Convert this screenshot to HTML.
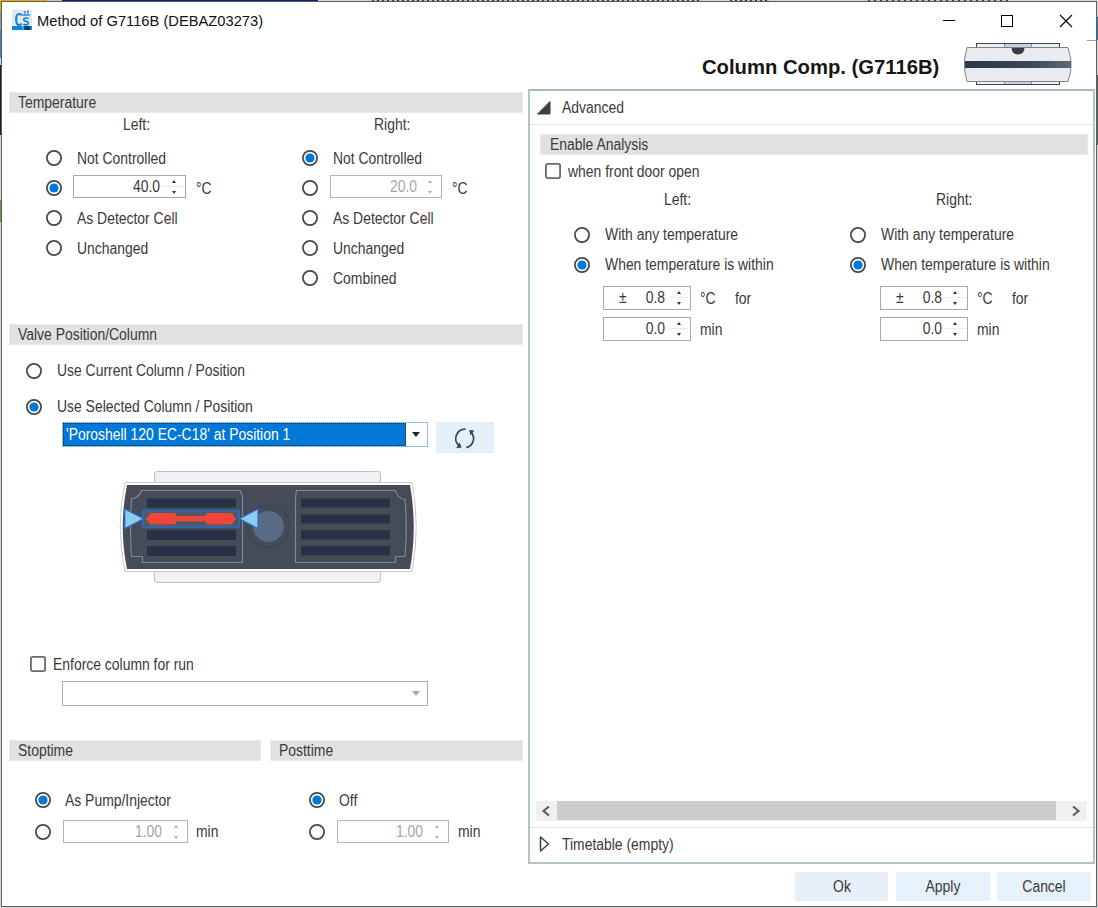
<!DOCTYPE html>
<html><head><meta charset="utf-8"><style>
html,body{margin:0;padding:0;width:1098px;height:908px;overflow:hidden;background:#fff}
.a{position:absolute}
.t{position:absolute;white-space:nowrap;font-family:"Liberation Sans", sans-serif}
.rad{width:16px;height:16px;border:1.7px solid #454a52;border-radius:50%;box-sizing:border-box;background:#fff}
.dot{width:9px;height:9px;border-radius:50%;background:#0078d7}
.chk{width:16px;height:16px;border:2px solid #3a3f47;box-sizing:border-box;background:#fff}
</style></head><body>
<div class="a" style="left:0px;top:0px;width:1098px;height:908px;background:#d6d6d6"></div>
<div class="a" style="left:0px;top:0px;width:47px;height:1px;background:#e8a800"></div>
<div class="a" style="left:47px;top:0px;width:15px;height:1px;background:#c4c8d0"></div>
<div class="a" style="left:62px;top:0px;width:256px;height:1px;background:#0a1a7a"></div>
<div class="a" style="left:0px;top:0px;width:1px;height:12px;background:#e8a800"></div>
<div class="a" style="left:372px;top:0px;width:330px;height:1px;background:repeating-linear-gradient(90deg,#3a3a3a 0 2px,#c4c4c4 2px 5px)"></div>
<div class="a" style="left:730px;top:0px;width:40px;height:1px;background:repeating-linear-gradient(90deg,#3a3a3a 0 2px,#c4c4c4 2px 5px)"></div>
<div class="a" style="left:868px;top:0px;width:140px;height:1px;background:repeating-linear-gradient(90deg,#3a3a3a 0 2px,#c4c4c4 2px 6px)"></div>
<div class="a" style="left:0px;top:12px;width:1px;height:18px;background:#9098a8"></div>
<div class="a" style="left:0px;top:30px;width:1px;height:28px;background:#3a82c8"></div>
<div class="a" style="left:0px;top:65px;width:1px;height:70px;background:#10203a"></div>
<div class="a" style="left:0px;top:200px;width:1px;height:22px;background:#5aa030"></div>
<div class="a" style="left:1097px;top:17px;width:1px;height:23px;background:#2a7ad0"></div>
<div class="a" style="left:1097px;top:75px;width:1px;height:70px;background:#505860"></div>
<div class="a" style="left:1px;top:1px;width:1096px;height:906px;background:#5e5e5e"></div>
<div class="a" style="left:2px;top:2px;width:1094px;height:904px;background:#ffffff"></div>
<div class="a" style="left:1087px;top:40px;width:9px;height:1px;background:#a0a0a0"></div>
<svg class="a" style="left:12px;top:10px" width="20" height="20" viewBox="12 10 20 20">
<rect x="12" y="10" width="20" height="16" fill="#dfe9f5"/>
<path d="M21.5 15.3 Q21 14 19 14 Q16.2 14 16.2 19.5 Q16.2 25 19 25 Q21 25 21.6 23.5" fill="none" stroke="#1a7fd0" stroke-width="2.1"/>
<path d="M28.3 18.6 Q28 18 26 18 Q23.6 18 23.8 19.8 Q24 21.2 26 21.4 Q28.4 21.7 28.3 23.3 Q28.2 24.8 26 24.8 Q24 24.8 23.5 24" fill="none" stroke="#1a7fd0" stroke-width="1.7"/>
<rect x="22.2" y="14.3" width="7.6" height="1.4" fill="#1a7fd0"/>
<rect x="24" y="11" width="1.6" height="2.6" fill="#3a8ed8"/>
<rect x="27" y="10.4" width="1.6" height="3.2" fill="#3a8ed8"/>
<rect x="12" y="26" width="20" height="4" fill="#1584d8"/>
<rect x="22" y="26" width="2.3" height="4" fill="#20b4ec"/>
<rect x="24.3" y="26" width="5.7" height="4" fill="#0b3a66"/>
</svg>
<div class="t" style="left:37px;top:12.10px;font-size:15px;line-height:17px;color:#111;font-weight:normal;transform:scaleX(0.98);transform-origin:0 0;">Method of G7116B (DEBAZ03273)</div>
<div class="a" style="left:943px;top:20px;width:12px;height:1px;background:#000"></div>
<div class="a" style="left:1001px;top:15px;width:12px;height:12px;border:1px solid #000;box-sizing:border-box"></div>
<svg class="a" style="left:1059px;top:14px" width="14" height="14"><path d="M1 1 L13 13 M13 1 L1 13" stroke="#000" stroke-width="1.1"/></svg>
<div class="t" style="left:702px;top:56.07px;font-size:20px;line-height:22px;color:#161616;font-weight:bold;transform:scaleX(1.012);transform-origin:0 0;">Column Comp. (G7116B)</div>
<svg class="a" style="left:960px;top:40px" width="115" height="50" viewBox="960 40 115 50">
<rect x="976.5" y="43.5" width="83" height="5" fill="#eef0f4" stroke="#3a4450" stroke-width="1"/>
<rect x="1005" y="44" width="26" height="4" fill="#cdd1d8"/>
<line x1="1004.5" y1="44" x2="1004.5" y2="48" stroke="#8a94a0"/><line x1="1031.5" y1="44" x2="1031.5" y2="48" stroke="#8a94a0"/>
<rect x="976.5" y="80.5" width="83" height="4" fill="#eef0f4" stroke="#3a4450" stroke-width="1"/>
<rect x="1005" y="81" width="26" height="3" fill="#cdd1d8"/><line x1="1004.5" y1="81" x2="1004.5" y2="84" stroke="#8a94a0"/><line x1="1031.5" y1="81" x2="1031.5" y2="84" stroke="#8a94a0"/>
<path d="M967 47.5 L1068 47.5 Q1071.5 60 1071 64.5 Q1071.5 70 1068 81.5 L967 81.5 Q964 70 964.5 64.5 Q964 60 967 47.5 Z" fill="#e9ebf1" stroke="#7a828e" stroke-width="1"/>
<defs><linearGradient id="cg" x1="0" x2="1"><stop offset="0" stop-color="#2c3846"/><stop offset="0.6" stop-color="#3a4656"/><stop offset="1" stop-color="#606873"/></linearGradient></defs>
<rect x="965" y="61" width="106" height="7" fill="url(#cg)"/>
<path d="M1011.5 48 L1024.5 48 Q1024 54.5 1018 54.5 Q1012 54.5 1011.5 48 Z" fill="#343e4a"/>
</svg>
<div class="a" style="left:9px;top:92px;width:514px;height:21px;background:#e9e9e9"></div>
<div class="a" style="left:10px;top:93px;width:512px;height:19px;background:#e1e1e1"></div>
<div class="t" style="left:18px;top:93.96px;font-size:16px;line-height:18px;color:#3a3a3a;font-weight:normal;transform:scaleX(0.87);transform-origin:0 0;">Temperature</div>
<div class="t" style="left:123px;top:116.46px;font-size:16px;line-height:18px;color:#3a3a3a;font-weight:normal;transform:scaleX(0.87);transform-origin:0 0;">Left:</div>
<div class="t" style="left:374px;top:116.46px;font-size:16px;line-height:18px;color:#3a3a3a;font-weight:normal;transform:scaleX(0.87);transform-origin:0 0;">Right:</div>
<svg class="a" style="left:44px;top:148px" width="20" height="20"><circle cx="10" cy="10" r="7.1" fill="#fff" stroke="#43484f" stroke-width="1.8"/></svg>
<div class="t" style="left:77px;top:149.96px;font-size:16px;line-height:18px;color:#3a3a3a;font-weight:normal;transform:scaleX(0.87);transform-origin:0 0;">Not Controlled</div>
<svg class="a" style="left:44px;top:178px" width="20" height="20"><circle cx="10" cy="10" r="7.1" fill="#fff" stroke="#43484f" stroke-width="1.8"/><circle cx="10" cy="10" r="4.6" fill="#0078d7"/></svg>
<div class="a" style="left:73px;top:175px;width:113px;height:23px;border:1px solid #a8a8a8;box-sizing:border-box;background:#fff"></div>
<div class="t" style="left:-40.5px;width:200px;text-align:right;top:178.46px;font-size:16px;line-height:18px;color:#3a3a3a;transform:scaleX(0.87);transform-origin:100% 0">40.0</div>
<div class="a" style="left:171.5px;top:180.0px;width:0;height:0;border-left:2.5px solid transparent;border-right:2.5px solid transparent;border-bottom:3px solid #333"></div>
<div class="a" style="left:171.5px;top:191.0px;width:0;height:0;border-left:2.5px solid transparent;border-right:2.5px solid transparent;border-top:3px solid #333"></div>
<div class="a" style="left:163px;top:185.5px;width:21px;height:1px;background:#ececec"></div>
<div class="t" style="left:196px;top:179.96px;font-size:16px;line-height:18px;color:#3a3a3a;font-weight:normal;transform:scaleX(0.87);transform-origin:0 0;">&deg;C</div>
<svg class="a" style="left:44px;top:208px" width="20" height="20"><circle cx="10" cy="10" r="7.1" fill="#fff" stroke="#43484f" stroke-width="1.8"/></svg>
<div class="t" style="left:77px;top:209.96px;font-size:16px;line-height:18px;color:#3a3a3a;font-weight:normal;transform:scaleX(0.87);transform-origin:0 0;">As Detector Cell</div>
<svg class="a" style="left:44px;top:238px" width="20" height="20"><circle cx="10" cy="10" r="7.1" fill="#fff" stroke="#43484f" stroke-width="1.8"/></svg>
<div class="t" style="left:77px;top:239.96px;font-size:16px;line-height:18px;color:#3a3a3a;font-weight:normal;transform:scaleX(0.87);transform-origin:0 0;">Unchanged</div>
<svg class="a" style="left:300px;top:148px" width="20" height="20"><circle cx="10" cy="10" r="7.1" fill="#fff" stroke="#43484f" stroke-width="1.8"/><circle cx="10" cy="10" r="4.6" fill="#0078d7"/></svg>
<div class="t" style="left:333px;top:149.96px;font-size:16px;line-height:18px;color:#3a3a3a;font-weight:normal;transform:scaleX(0.87);transform-origin:0 0;">Not Controlled</div>
<svg class="a" style="left:300px;top:178px" width="20" height="20"><circle cx="10" cy="10" r="7.1" fill="#fff" stroke="#43484f" stroke-width="1.8"/></svg>
<div class="a" style="left:330px;top:175px;width:112px;height:23px;border:1px solid #b4b4b4;box-sizing:border-box;background:#fff"></div>
<div class="t" style="left:216.5px;width:200px;text-align:right;top:178.46px;font-size:16px;line-height:18px;color:#a6a6a6;transform:scaleX(0.87);transform-origin:100% 0">20.0</div>
<div class="a" style="left:427.5px;top:180.0px;width:0;height:0;border-left:2.5px solid transparent;border-right:2.5px solid transparent;border-bottom:3px solid #b0b0b0"></div>
<div class="a" style="left:427.5px;top:191.0px;width:0;height:0;border-left:2.5px solid transparent;border-right:2.5px solid transparent;border-top:3px solid #b0b0b0"></div>
<div class="t" style="left:452px;top:179.96px;font-size:16px;line-height:18px;color:#3a3a3a;font-weight:normal;transform:scaleX(0.87);transform-origin:0 0;">&deg;C</div>
<svg class="a" style="left:300px;top:208px" width="20" height="20"><circle cx="10" cy="10" r="7.1" fill="#fff" stroke="#43484f" stroke-width="1.8"/></svg>
<div class="t" style="left:333px;top:209.96px;font-size:16px;line-height:18px;color:#3a3a3a;font-weight:normal;transform:scaleX(0.87);transform-origin:0 0;">As Detector Cell</div>
<svg class="a" style="left:300px;top:238px" width="20" height="20"><circle cx="10" cy="10" r="7.1" fill="#fff" stroke="#43484f" stroke-width="1.8"/></svg>
<div class="t" style="left:333px;top:239.96px;font-size:16px;line-height:18px;color:#3a3a3a;font-weight:normal;transform:scaleX(0.87);transform-origin:0 0;">Unchanged</div>
<svg class="a" style="left:300px;top:268px" width="20" height="20"><circle cx="10" cy="10" r="7.1" fill="#fff" stroke="#43484f" stroke-width="1.8"/></svg>
<div class="t" style="left:333px;top:269.96px;font-size:16px;line-height:18px;color:#3a3a3a;font-weight:normal;transform:scaleX(0.87);transform-origin:0 0;">Combined</div>
<div class="a" style="left:9px;top:324px;width:514px;height:21px;background:#e9e9e9"></div>
<div class="a" style="left:10px;top:325px;width:512px;height:19px;background:#e1e1e1"></div>
<div class="t" style="left:18px;top:325.96px;font-size:16px;line-height:18px;color:#3a3a3a;font-weight:normal;transform:scaleX(0.87);transform-origin:0 0;">Valve Position/Column</div>
<svg class="a" style="left:24px;top:360.5px" width="20" height="20"><circle cx="10" cy="10" r="7.1" fill="#fff" stroke="#43484f" stroke-width="1.8"/></svg>
<div class="t" style="left:57px;top:362.46px;font-size:16px;line-height:18px;color:#3a3a3a;font-weight:normal;transform:scaleX(0.87);transform-origin:0 0;">Use Current Column / Position</div>
<svg class="a" style="left:24px;top:396.5px" width="20" height="20"><circle cx="10" cy="10" r="7.1" fill="#fff" stroke="#43484f" stroke-width="1.8"/><circle cx="10" cy="10" r="4.6" fill="#0078d7"/></svg>
<div class="t" style="left:57px;top:398.46px;font-size:16px;line-height:18px;color:#3a3a3a;font-weight:normal;transform:scaleX(0.87);transform-origin:0 0;">Use Selected Column / Position</div>
<div class="a" style="left:62px;top:422px;width:366px;height:25px;border:1px solid #8fc0ea;box-sizing:border-box;background:#fff"></div>
<div class="a" style="left:63px;top:423px;width:343px;height:23px;background:#0078d7;outline:1px dotted #222;outline-offset:-1px"></div>
<div class="t" style="left:66px;top:426.46px;font-size:16px;line-height:18px;color:#fff;font-weight:normal;transform:scaleX(0.87);transform-origin:0 0;">'Poroshell 120 EC-C18' at Position 1</div>
<div class="a" style="left:412px;top:432px;width:0;height:0;border-left:4.5px solid transparent;border-right:4.5px solid transparent;border-top:5px solid #222"></div>
<div class="a" style="left:436px;top:422px;width:58px;height:31px;background:#e3f0fa"></div>
<svg class="a" style="left:450px;top:424px" width="30" height="30" viewBox="450 424 30 30">
<path d="M465.5 429.2 A9.4 9.4 0 0 0 459.4 446" fill="none" stroke="#3c4550" stroke-width="1.7"/>
<path d="M466.3 447.6 A9.4 9.4 0 0 0 470.8 431.8" fill="none" stroke="#3c4550" stroke-width="1.7"/>
<path d="M456.2 448.3 L461.6 447.6 L459.6 442.2 Z" fill="#3c4550"/>
<path d="M469.2 430.1 L474.4 430.6 L470.4 435.4 Z" fill="#3c4550"/>
</svg>
<svg class="a" style="left:110px;top:465px" width="320" height="125" viewBox="110 465 320 125">
<rect x="154.5" y="471.5" width="226" height="20" rx="2.5" fill="#eff1f5" stroke="#b9c0cf" stroke-width="1"/>
<rect x="154.5" y="562.5" width="226" height="20" rx="2.5" fill="#eff1f5" stroke="#b9c0cf" stroke-width="1"/>
<path d="M125 482.5 L412 482.5 Q420.5 526 412 571.5 L125 571.5 Q115.5 526 125 482.5 Z" fill="#fff" stroke="#c3c8d3" stroke-width="1"/>
<path d="M127 485 L410 485 Q417.5 527 410 569 L127 569 Q118.5 527 127 485 Z" fill="#454c57"/>
<path d="M141.5 490.5 L240.5 490.5 L242.5 497 L242.5 562.5 L142.5 562.5 L142.5 556.5 L131.5 556.5 Q129.5 526 131.5 498.5 Q139 498 141.5 490.5 Z" fill="none" stroke="#7d8597" stroke-width="1.2"/>
<path d="M296.5 490.5 L395.5 490.5 Q397 498 405 499.5 Q407.5 526 405 556.5 L395.5 556.5 L395.5 562.5 L295.5 562.5 L295.5 497 Z" fill="none" stroke="#7d8597" stroke-width="1.2"/>
<g fill="#283246">
<rect x="147" y="498.5" width="89" height="9"/>
<rect x="147" y="530" width="89" height="10"/>
<rect x="147" y="546" width="89" height="10"/>
<rect x="301" y="498.5" width="89" height="9"/>
<rect x="301" y="514.5" width="89" height="9"/>
<rect x="301" y="530.2" width="89" height="9.3"/>
<rect x="301" y="546" width="89" height="9.4"/>
</g>
<circle cx="268.4" cy="526.4" r="21" fill="none" stroke="#3c4557" stroke-width="1.2"/>
<circle cx="268.4" cy="526.4" r="15.5" fill="#5b6b86"/>
<rect x="142.8" y="510.5" width="96.5" height="16.5" fill="#4d5869" stroke="#2d6cc2" stroke-width="1.5"/>
<g fill="#f0463a"><rect x="148.5" y="513" width="28" height="11.4" rx="3.5"/><rect x="205.5" y="513" width="28" height="11.4" rx="3.5"/><rect x="175" y="516" width="32" height="5.4"/><path d="M145.5 518.7 L150 515 L150 522.4 Z"/><path d="M236.5 518.7 L232 515 L232 522.4 Z"/></g>
<path d="M124.8 509 L143.5 518.7 L124.8 528.5 Z" fill="#8ecbf2" stroke="#2c6cc4" stroke-width="1.2"/>
<path d="M258 509 L239.3 518.7 L258 528.5 Z" fill="#8ecbf2" stroke="#2c6cc4" stroke-width="1.2"/>
</svg>
<svg class="a" style="left:30px;top:656px" width="16" height="16"><rect x="0.9" y="0.9" width="14.2" height="14.2" rx="1.8" fill="#fff" stroke="#636a73" stroke-width="1.8"/></svg>
<div class="t" style="left:53px;top:656.46px;font-size:16px;line-height:18px;color:#3a3a3a;font-weight:normal;transform:scaleX(0.87);transform-origin:0 0;">Enforce column for run</div>
<div class="a" style="left:62px;top:681px;width:366px;height:25px;border:1px solid #adadad;box-sizing:border-box;background:#fff"></div>
<div class="a" style="left:412px;top:691px;width:0;height:0;border-left:4.5px solid transparent;border-right:4.5px solid transparent;border-top:5px solid #a8a8a8"></div>
<div class="a" style="left:9px;top:740px;width:252px;height:21px;background:#e9e9e9"></div>
<div class="a" style="left:10px;top:741px;width:250px;height:19px;background:#e1e1e1"></div>
<div class="t" style="left:18px;top:741.96px;font-size:16px;line-height:18px;color:#3a3a3a;font-weight:normal;transform:scaleX(0.87);transform-origin:0 0;">Stoptime</div>
<div class="a" style="left:270px;top:740px;width:253px;height:21px;background:#e9e9e9"></div>
<div class="a" style="left:271px;top:741px;width:251px;height:19px;background:#e1e1e1"></div>
<div class="t" style="left:279px;top:741.96px;font-size:16px;line-height:18px;color:#3a3a3a;font-weight:normal;transform:scaleX(0.87);transform-origin:0 0;">Posttime</div>
<svg class="a" style="left:32.5px;top:790px" width="20" height="20"><circle cx="10" cy="10" r="7.1" fill="#fff" stroke="#43484f" stroke-width="1.8"/><circle cx="10" cy="10" r="4.6" fill="#0078d7"/></svg>
<div class="t" style="left:65px;top:792.46px;font-size:16px;line-height:18px;color:#3a3a3a;font-weight:normal;transform:scaleX(0.87);transform-origin:0 0;">As Pump/Injector</div>
<svg class="a" style="left:32.5px;top:821.5px" width="20" height="20"><circle cx="10" cy="10" r="7.1" fill="#fff" stroke="#43484f" stroke-width="1.8"/></svg>
<div class="a" style="left:63px;top:820px;width:125px;height:23px;border:1px solid #b4b4b4;box-sizing:border-box;background:#fff"></div>
<div class="t" style="left:-38px;width:200px;text-align:right;top:823.46px;font-size:16px;line-height:18px;color:#a6a6a6;transform:scaleX(0.87);transform-origin:100% 0">1.00</div>
<div class="a" style="left:173.5px;top:825.0px;width:0;height:0;border-left:2.5px solid transparent;border-right:2.5px solid transparent;border-bottom:3px solid #b0b0b0"></div>
<div class="a" style="left:173.5px;top:836.0px;width:0;height:0;border-left:2.5px solid transparent;border-right:2.5px solid transparent;border-top:3px solid #b0b0b0"></div>
<div class="t" style="left:196px;top:823.46px;font-size:16px;line-height:18px;color:#3a3a3a;font-weight:normal;transform:scaleX(0.87);transform-origin:0 0;">min</div>
<svg class="a" style="left:306.5px;top:790px" width="20" height="20"><circle cx="10" cy="10" r="7.1" fill="#fff" stroke="#43484f" stroke-width="1.8"/><circle cx="10" cy="10" r="4.6" fill="#0078d7"/></svg>
<div class="t" style="left:339px;top:792.46px;font-size:16px;line-height:18px;color:#3a3a3a;font-weight:normal;transform:scaleX(0.87);transform-origin:0 0;">Off</div>
<svg class="a" style="left:306.5px;top:821.5px" width="20" height="20"><circle cx="10" cy="10" r="7.1" fill="#fff" stroke="#43484f" stroke-width="1.8"/></svg>
<div class="a" style="left:337px;top:820px;width:112px;height:23px;border:1px solid #b4b4b4;box-sizing:border-box;background:#fff"></div>
<div class="t" style="left:223px;width:200px;text-align:right;top:823.46px;font-size:16px;line-height:18px;color:#a6a6a6;transform:scaleX(0.87);transform-origin:100% 0">1.00</div>
<div class="a" style="left:434.5px;top:825.0px;width:0;height:0;border-left:2.5px solid transparent;border-right:2.5px solid transparent;border-bottom:3px solid #b0b0b0"></div>
<div class="a" style="left:434.5px;top:836.0px;width:0;height:0;border-left:2.5px solid transparent;border-right:2.5px solid transparent;border-top:3px solid #b0b0b0"></div>
<div class="t" style="left:458px;top:823.46px;font-size:16px;line-height:18px;color:#3a3a3a;font-weight:normal;transform:scaleX(0.87);transform-origin:0 0;">min</div>
<div class="a" style="left:528px;top:89px;width:567px;height:775px;border:2px solid #b0c6c6;border-top-color:#a3bdbd;box-sizing:border-box;background:#fff"></div>
<svg class="a" style="left:536px;top:100px" width="16" height="16"><path d="M1.5 14 L14 14 L14 1.5 Z" fill="#37414b" stroke="#37414b" stroke-width="1" stroke-linejoin="round"/></svg>
<div class="t" style="left:562px;top:98.96px;font-size:16px;line-height:18px;color:#3a3a3a;font-weight:normal;transform:scaleX(0.87);transform-origin:0 0;">Advanced</div>
<div class="a" style="left:530px;top:124px;width:563px;height:1px;background:#e3e3e3"></div>
<div class="a" style="left:540px;top:134px;width:548px;height:21px;background:#e9e9e9"></div>
<div class="a" style="left:541px;top:135px;width:546px;height:19px;background:#e1e1e1"></div>
<div class="t" style="left:550px;top:135.96px;font-size:16px;line-height:18px;color:#3a3a3a;font-weight:normal;transform:scaleX(0.87);transform-origin:0 0;">Enable Analysis</div>
<svg class="a" style="left:545px;top:162.5px" width="16" height="16"><rect x="0.9" y="0.9" width="14.2" height="14.2" rx="1.8" fill="#fff" stroke="#636a73" stroke-width="1.8"/></svg>
<div class="t" style="left:568px;top:162.96px;font-size:16px;line-height:18px;color:#3a3a3a;font-weight:normal;transform:scaleX(0.87);transform-origin:0 0;">when front door open</div>
<div class="t" style="left:664px;top:190.96px;font-size:16px;line-height:18px;color:#3a3a3a;font-weight:normal;transform:scaleX(0.87);transform-origin:0 0;">Left:</div>
<div class="t" style="left:936px;top:190.96px;font-size:16px;line-height:18px;color:#3a3a3a;font-weight:normal;transform:scaleX(0.87);transform-origin:0 0;">Right:</div>
<svg class="a" style="left:571.5px;top:224.5px" width="20" height="20"><circle cx="10" cy="10" r="7.1" fill="#fff" stroke="#43484f" stroke-width="1.8"/></svg>
<div class="t" style="left:605px;top:226.46px;font-size:16px;line-height:18px;color:#3a3a3a;font-weight:normal;transform:scaleX(0.87);transform-origin:0 0;">With any temperature</div>
<svg class="a" style="left:571.5px;top:254.5px" width="20" height="20"><circle cx="10" cy="10" r="7.1" fill="#fff" stroke="#43484f" stroke-width="1.8"/><circle cx="10" cy="10" r="4.6" fill="#0078d7"/></svg>
<div class="t" style="left:605px;top:256.46px;font-size:16px;line-height:18px;color:#3a3a3a;font-weight:normal;transform:scaleX(0.87);transform-origin:0 0;">When temperature is within</div>
<div class="a" style="left:603px;top:286px;width:88px;height:24px;border:1px solid #a8a8a8;box-sizing:border-box;background:#fff"></div>
<div class="t" style="left:465px;width:200px;text-align:right;top:288.96px;font-size:16px;line-height:18px;color:#3a3a3a;transform:scaleX(0.87);transform-origin:100% 0">0.8</div>
<div class="t" style="left:619px;top:288.96px;font-size:16px;line-height:18px;color:#3a3a3a;font-weight:normal;transform:scaleX(0.87);transform-origin:0 0;">&plusmn;</div>
<div class="a" style="left:676.5px;top:290.5px;width:0;height:0;border-left:2.5px solid transparent;border-right:2.5px solid transparent;border-bottom:3px solid #333"></div>
<div class="a" style="left:676.5px;top:301.5px;width:0;height:0;border-left:2.5px solid transparent;border-right:2.5px solid transparent;border-top:3px solid #333"></div>
<div class="a" style="left:668px;top:296.5px;width:21px;height:1px;background:#ececec"></div>
<div class="t" style="left:700px;top:289.96px;font-size:16px;line-height:18px;color:#3a3a3a;font-weight:normal;transform:scaleX(0.87);transform-origin:0 0;">&deg;C</div>
<div class="t" style="left:735px;top:289.96px;font-size:16px;line-height:18px;color:#3a3a3a;font-weight:normal;transform:scaleX(0.87);transform-origin:0 0;">for</div>
<div class="a" style="left:603px;top:317px;width:88px;height:24px;border:1px solid #a8a8a8;box-sizing:border-box;background:#fff"></div>
<div class="t" style="left:465px;width:200px;text-align:right;top:319.96px;font-size:16px;line-height:18px;color:#3a3a3a;transform:scaleX(0.87);transform-origin:100% 0">0.0</div>
<div class="a" style="left:676.5px;top:321.5px;width:0;height:0;border-left:2.5px solid transparent;border-right:2.5px solid transparent;border-bottom:3px solid #333"></div>
<div class="a" style="left:676.5px;top:332.5px;width:0;height:0;border-left:2.5px solid transparent;border-right:2.5px solid transparent;border-top:3px solid #333"></div>
<div class="a" style="left:668px;top:327.5px;width:21px;height:1px;background:#ececec"></div>
<div class="t" style="left:700px;top:320.96px;font-size:16px;line-height:18px;color:#3a3a3a;font-weight:normal;transform:scaleX(0.87);transform-origin:0 0;">min</div>
<svg class="a" style="left:848px;top:224.5px" width="20" height="20"><circle cx="10" cy="10" r="7.1" fill="#fff" stroke="#43484f" stroke-width="1.8"/></svg>
<div class="t" style="left:881px;top:226.46px;font-size:16px;line-height:18px;color:#3a3a3a;font-weight:normal;transform:scaleX(0.87);transform-origin:0 0;">With any temperature</div>
<svg class="a" style="left:848px;top:254.5px" width="20" height="20"><circle cx="10" cy="10" r="7.1" fill="#fff" stroke="#43484f" stroke-width="1.8"/><circle cx="10" cy="10" r="4.6" fill="#0078d7"/></svg>
<div class="t" style="left:881px;top:256.46px;font-size:16px;line-height:18px;color:#3a3a3a;font-weight:normal;transform:scaleX(0.87);transform-origin:0 0;">When temperature is within</div>
<div class="a" style="left:879.5px;top:286px;width:88px;height:24px;border:1px solid #a8a8a8;box-sizing:border-box;background:#fff"></div>
<div class="t" style="left:741.5px;width:200px;text-align:right;top:288.96px;font-size:16px;line-height:18px;color:#3a3a3a;transform:scaleX(0.87);transform-origin:100% 0">0.8</div>
<div class="t" style="left:895.5px;top:288.96px;font-size:16px;line-height:18px;color:#3a3a3a;font-weight:normal;transform:scaleX(0.87);transform-origin:0 0;">&plusmn;</div>
<div class="a" style="left:953.0px;top:290.5px;width:0;height:0;border-left:2.5px solid transparent;border-right:2.5px solid transparent;border-bottom:3px solid #333"></div>
<div class="a" style="left:953.0px;top:301.5px;width:0;height:0;border-left:2.5px solid transparent;border-right:2.5px solid transparent;border-top:3px solid #333"></div>
<div class="a" style="left:944.5px;top:296.5px;width:21px;height:1px;background:#ececec"></div>
<div class="t" style="left:976.5px;top:289.96px;font-size:16px;line-height:18px;color:#3a3a3a;font-weight:normal;transform:scaleX(0.87);transform-origin:0 0;">&deg;C</div>
<div class="t" style="left:1011.5px;top:289.96px;font-size:16px;line-height:18px;color:#3a3a3a;font-weight:normal;transform:scaleX(0.87);transform-origin:0 0;">for</div>
<div class="a" style="left:879.5px;top:317px;width:88px;height:24px;border:1px solid #a8a8a8;box-sizing:border-box;background:#fff"></div>
<div class="t" style="left:741.5px;width:200px;text-align:right;top:319.96px;font-size:16px;line-height:18px;color:#3a3a3a;transform:scaleX(0.87);transform-origin:100% 0">0.0</div>
<div class="a" style="left:953.0px;top:321.5px;width:0;height:0;border-left:2.5px solid transparent;border-right:2.5px solid transparent;border-bottom:3px solid #333"></div>
<div class="a" style="left:953.0px;top:332.5px;width:0;height:0;border-left:2.5px solid transparent;border-right:2.5px solid transparent;border-top:3px solid #333"></div>
<div class="a" style="left:944.5px;top:327.5px;width:21px;height:1px;background:#ececec"></div>
<div class="t" style="left:976.5px;top:320.96px;font-size:16px;line-height:18px;color:#3a3a3a;font-weight:normal;transform:scaleX(0.87);transform-origin:0 0;">min</div>
<div class="a" style="left:536px;top:801px;width:551px;height:20px;background:#f0f0f0"></div>
<div class="a" style="left:557px;top:801px;width:499px;height:19px;background:#cdcdcd"></div>
<svg class="a" style="left:538px;top:803px" width="16" height="16"><path d="M11 3.5 L5.5 8 L11 12.5" fill="none" stroke="#606060" stroke-width="2.2"/></svg>
<svg class="a" style="left:1068px;top:803px" width="16" height="16"><path d="M5 3.5 L10.5 8 L5 12.5" fill="none" stroke="#606060" stroke-width="2.2"/></svg>
<div class="a" style="left:530px;top:827px;width:563px;height:1px;background:#e6e6e6"></div>
<svg class="a" style="left:537px;top:835px" width="16" height="20"><path d="M3.5 2 L11.5 9 L3.5 16 Z" fill="none" stroke="#37414b" stroke-width="1.5" stroke-linejoin="round"/></svg>
<div class="t" style="left:562px;top:835.96px;font-size:16px;line-height:18px;color:#3a3a3a;font-weight:normal;transform:scaleX(0.87);transform-origin:0 0;">Timetable (empty)</div>
<div class="a" style="left:795px;top:872px;width:93px;height:29px;background:#e7eff9"></div>
<div class="t" style="left:741.5px;width:200px;text-align:center;top:878.46px;font-size:16px;line-height:18px;color:#3a3a3a;transform:scaleX(0.87);transform-origin:50% 0">Ok</div>
<div class="a" style="left:896px;top:872px;width:94px;height:29px;background:#e5f1fb"></div>
<div class="t" style="left:843.0px;width:200px;text-align:center;top:878.46px;font-size:16px;line-height:18px;color:#3a3a3a;transform:scaleX(0.87);transform-origin:50% 0">Apply</div>
<div class="a" style="left:997px;top:872px;width:94px;height:29px;background:#e5f1fb"></div>
<div class="t" style="left:944.0px;width:200px;text-align:center;top:878.46px;font-size:16px;line-height:18px;color:#3a3a3a;transform:scaleX(0.87);transform-origin:50% 0">Cancel</div>
</body></html>
